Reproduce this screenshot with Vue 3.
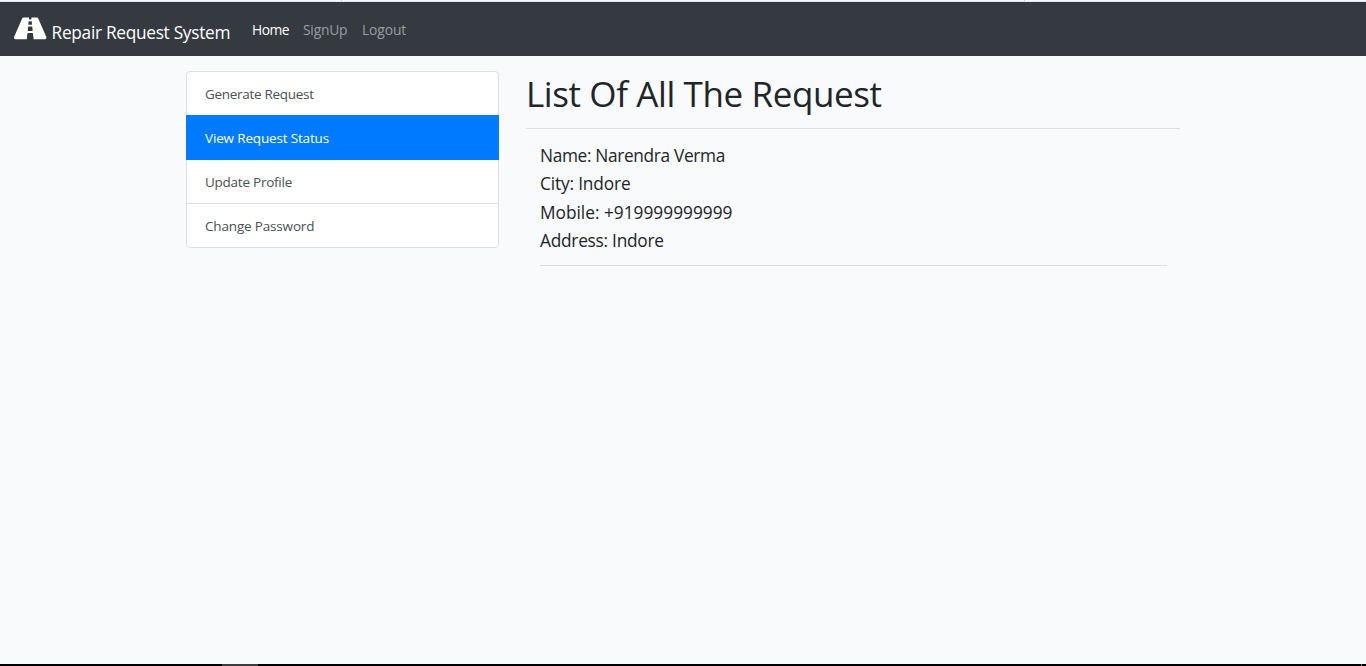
<script setup>
const links = [
  { label: 'Home', cls: 'home' },
  { label: 'SignUp', cls: 'signup' },
  { label: 'Logout', cls: 'logout' },
]
const menu = [
  { label: 'Generate Request', cls: 'generate' },
  { label: 'View Request Status', cls: 'active' },
  { label: 'Update Profile', cls: 'update' },
  { label: 'Change Password', cls: 'password' },
]
const details = [
  { text: 'Name: Narendra Verma', cls: 'name' },
  { text: 'City: Indore', cls: 'city' },
  { text: 'Mobile: +919999999999', cls: 'mobile' },
  { text: 'Address: Indore', cls: 'address' },
]
</script>

<template>
  <div class="page">
    <div class="top-edge"><i></i><i></i></div>
    <nav class="navbar">
      <a class="brand">
        <svg class="road" viewBox="0 0 576 512" aria-hidden="true">
          <path fill="#fff" d="M573.19 402.67l-139.79-320C428.43 71.29 417.6 64 405.68 64h-97.59l2.45 23.16c.5 4.72-3.21 8.84-7.96 8.84h-29.16c-4.75 0-8.46-4.12-7.96-8.84L267.91 64h-97.59c-11.93 0-22.76 7.29-27.73 18.67L2.8 402.67C-6.45 423.86 8.31 448 30.54 448h196.84l10.31-97.68c.86-8.14 7.72-14.32 15.91-14.32h68.8c8.19 0 15.05 6.18 15.91 14.32L348.62 448h196.84c22.23 0 36.99-24.14 27.73-45.33zM260.4 135.16a8 8 0 0 1 7.96-7.16h39.29c4.09 0 7.53 3.09 7.96 7.16l4.6 43.58c.75 7.09-4.81 13.26-11.93 13.26h-40.54c-7.13 0-12.68-6.17-11.93-13.26l4.59-43.58zM315.64 304h-55.29c-9.5 0-16.91-8.23-15.91-17.68l5.07-48c.86-8.14 7.72-14.32 15.91-14.32h45.15c8.19 0 15.05 6.18 15.91 14.32l5.07 48c1 9.45-6.41 17.68-15.91 17.68z" />
        </svg>
        <span class="brand-text">Repair Request System</span>
      </a>
      <a v-for="l in links" :key="l.label" class="link" :class="l.cls">{{ l.label }}</a>
    </nav>
    <main class="container">
      <aside class="menu">
        <a v-for="m in menu" :key="m.label" class="item" :class="m.cls">{{ m.label }}</a>
      </aside>
      <section class="content">
        <h1>List Of All The Request</h1>
        <div class="details">
          <p v-for="d in details" :key="d.cls" :class="d.cls">{{ d.text }}</p>
        </div>
      </section>
    </main>
    <div class="bottom-edge"><i></i><b></b></div>
  </div>
</template>

<style>
body { margin: 0; overflow: hidden; background: #f8fafc; }
</style>

<style scoped>
* { box-sizing: border-box; }
.page {
  height: 666px; display: flex; flex-direction: column;
  background: #f8fafc; color: #212529;
  font-family: "Segoe UI", "Open Sans", "Noto Sans", sans-serif;
}
.top-edge {
  height: 2px; flex: none; background: linear-gradient(#f8fafb 50%, #dfeaf2 50%);
  display: flex; padding-left: 341px; gap: 682px;
}
.top-edge i { width: 1px; height: 1px; background: #c5cace; }
.navbar { height: 54px; flex: none; background: #343a40; display: flex; align-items: flex-start; padding-left: 14px; }
.brand { display: flex; color: #fff; width: 238px; }
.road { width: 32.4px; height: 28.8px; margin: 12px 0 0 0.2px; flex: none; }
.brand-text { font-size: 17.3px; line-height: 27px; margin: 17px 0 0 5px; white-space: nowrap; letter-spacing: -0.3px; }
.link { font-size: 13.8px; line-height: 22px; margin-top: 17px; color: #9a9da0; white-space: nowrap; }
.home { width: 51px; color: #fff; letter-spacing: -0.5px; }
.signup { width: 59px; letter-spacing: -0.2px; }
.logout { letter-spacing: -0.1px; }
.container { flex: 1; width: 994px; margin: 15px 0 0 186px; display: flex; align-items: flex-start; gap: 27px; }
.menu { width: 313px; height: 177px; display: flex; flex-direction: column; background: #fff; border: 1px solid #dcdfe2; border-radius: 4px; }
.item { flex: none; height: 43px; padding-left: 18px; font-size: 13.5px; line-height: 44px; color: #495057; white-space: nowrap; }
.generate { letter-spacing: -0.3px; }
.active { height: 45px; margin: 0 -1px; padding-left: 19px; line-height: 46px; background: #007bff; color: #fff; letter-spacing: -0.16px; }
.update { height: 44px; border-bottom: 1px solid #dcdfe2; letter-spacing: -0.25px; }
.password { letter-spacing: -0.17px; }
.content { width: 654px; }
h1 { font-size: 35px; font-weight: 400; line-height: 46px; height: 58px; margin: 0; border-bottom: 1px solid #dcdfe2; letter-spacing: -0.4px; white-space: nowrap; }
.details { margin: 0 13px 0 14px; padding-top: 13px; height: 137px; border-bottom: 1px solid #dcdfe2; }
.details p { margin: 0; font-size: 17.3px; line-height: 28.4px; white-space: nowrap; }
.details .name { letter-spacing: -0.34px; }
.details .city { letter-spacing: -0.15px; }
.details .address { letter-spacing: -0.25px; }
.bottom-edge { height: 2px; flex: none; background: #000; display: flex; justify-content: space-between; padding: 0 4px 0 222px; }
.bottom-edge i { width: 36px; background: #3c3c3c; }
.bottom-edge b { width: 1px; background: #777; }
</style>
